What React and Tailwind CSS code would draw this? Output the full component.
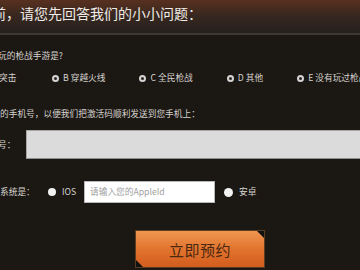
import React from "react";

const font = { fontFamily: '"Noto Sans CJK SC", "Noto Sans", sans-serif' };

function Ring() {
  return <span className="inline-block w-[7px] h-[7px] rounded-full border-2 border-[#d4d4d4] bg-[#2a2622] shrink-0" />;
}

function Option({ letter, text, className = "" }) {
  return (
    <div className={"flex items-center shrink-0 " + className}>
      <Ring />
      <span className="ml-[4px]">{letter}</span>
      <span className="ml-[2px]">{text}</span>
    </div>
  );
}

export default function App() {
  return (
    <div className="w-[360px] h-[270px] overflow-hidden bg-[#1b1713] text-[#d6d3cf]" style={font}>
      <div className="h-[33px] bg-gradient-to-b from-[#58301f] via-[#362720] to-[#26201c] pt-[6px]">
        <div className="ml-[-8px] text-[14px] leading-[14px] text-[#efebe8] whitespace-nowrap">前，请您先回答我们的小小问题：</div>
      </div>
      <div className="h-[2px] bg-[#3d3833]" />
      <div className="mt-[16px] ml-[-2px] text-[8.7px] leading-[10px] whitespace-nowrap">玩的枪战手游是?</div>
      <div className="mt-[12px] flex items-center text-[8.7px] leading-[10px] whitespace-nowrap">
        <span className="ml-[-1px] w-[53px] shrink-0">突击</span>
        <Option letter="B" text="穿越火线" />
        <Option letter="C" text="全民枪战" className="ml-[34px]" />
        <Option letter="D" text="其他" className="ml-[34px]" />
        <Option letter="E" text="没有玩过枪战手游" className="ml-[34px]" />
      </div>
      <div className="mt-[26px] text-[8.7px] leading-[10px] whitespace-nowrap">的手机号，以便我们把激活码顺利发送到您手机上：</div>
      <div className="mt-[11px] flex items-center">
        <span className="w-[26px] shrink-0 text-[8.7px] leading-[10px] whitespace-nowrap ml-[-2px] mr-[2px]">号：</span>
        <div className="h-[29px] flex-1 mr-[-10px] bg-[#dbdbdb] border border-[#a6a6a6] border-b-[#8e8e8e]" />
      </div>
      <div className="mt-[22px] flex items-center text-[8.7px] leading-[10px] whitespace-nowrap">
        <span className="w-[48px] shrink-0">系统是：</span>
        <span className="w-[8px] h-[8px] rounded-full bg-[#f2f2f2] shrink-0" />
        <span className="ml-[6px] w-[22px] shrink-0">IOS</span>
        <div className="w-[131px] h-[22px] bg-white border border-[#b8b8b8] flex items-center px-[5px] text-[#a0a0a0] text-[8.7px]">请输入您的AppleId</div>
        <span className="ml-[9px] w-[9px] h-[9px] rounded-full bg-[#f2f2f2] shrink-0" />
        <span className="ml-[6px]">安卓</span>
      </div>
      <div className="mt-[27px] flex">
        <div className="ml-[135px] relative w-[130px] h-[38px] border border-[#5a3c20] bg-gradient-to-b from-[#ee9650] via-[#e2742e] to-[#d25c1c] flex items-center justify-center">
          <span className="text-[15px] leading-[15px] text-[#4a2810] tracking-[0.5px]">立即预约</span>
          <span className="absolute top-0 right-0 w-0 h-0 border-l-[7px] border-l-transparent border-t-[7px] border-t-[#111]" />
          <span className="absolute bottom-0 left-0 w-0 h-0 border-r-[7px] border-r-transparent border-b-[7px] border-b-[#111]" />
        </div>
      </div>
    </div>
  );
}
